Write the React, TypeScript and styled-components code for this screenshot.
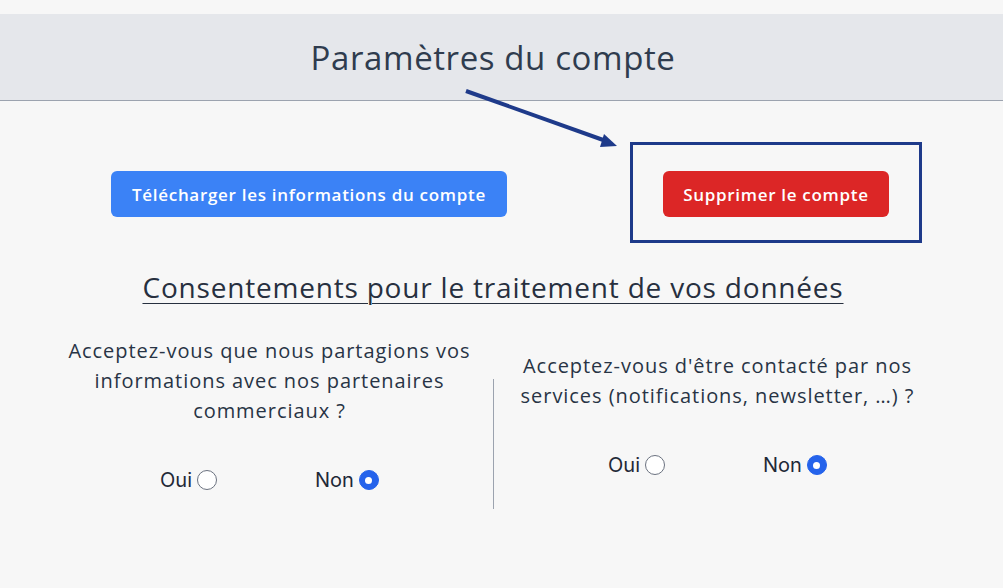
import React from "react";
import styled, { createGlobalStyle } from "styled-components";

const GlobalStyle = createGlobalStyle`
  html, body {
    margin: 0;
    padding: 0;
    background: #f7f7f7;
  }
  body {
    font-family: "Open Sans", "Noto Sans", sans-serif;
    color: #283445;
  }
`;

const Page = styled.div`
  position: relative;
  width: 1003px;
  min-height: 588px;
  padding-top: 14px;
  box-sizing: border-box;
`;

const Header = styled.header`
  height: 86px;
  background: #e5e7eb;
  border-bottom: 1px solid #9ca3af;
  display: flex;
  align-items: center;
  justify-content: center;
`;

const Title = styled.h1`
  margin: 0 0 0 -17px;
  font-size: 33px;
  font-weight: 400;
  color: #2f3c4e;
  letter-spacing: 0.6px;
`;

const ActionsRow = styled.div`
  display: flex;
  align-items: flex-start;
  padding-left: 111px;
  gap: 123px;
  margin-top: 41px;
`;

const Button = styled.button<{ $variant: "primary" | "danger" }>`
  height: 46px;
  padding: 0 ${(p) => (p.$variant === "primary" ? "21px" : "20px")};
  border: none;
  border-radius: 6px;
  background: ${(p) => (p.$variant === "primary" ? "#3b82f6" : "#dc2626")};
  color: #ffffff;
  font-family: "Open Sans", sans-serif;
  font-size: 17px;
  font-weight: 600;
  letter-spacing: 0.7px;
  white-space: nowrap;
  cursor: pointer;
  margin-top: ${(p) => (p.$variant === "primary" ? "29px" : "0")};
`;

const Highlight = styled.div`
  border: 3px solid #1e3a8a;
  padding: 26px 29px 23px;
  box-sizing: content-box;
  width: 228px;
  display: flex;
  justify-content: center;
`;

const SectionTitle = styled.h2`
  margin: 26px 0 0 -17px;
  text-align: center;
  font-size: 28px;
  line-height: 36px;
  font-weight: 400;
  letter-spacing: 0.8px;
  color: #27303f;
  text-decoration: underline;
  text-decoration-thickness: 1px;
  text-underline-offset: 5px;
`;

const Questions = styled.div`
  display: flex;
  align-items: center;
  margin-top: 14px;
  padding-left: 46px;
`;

const Question = styled.div`
  width: 447px;
  display: flex;
  flex-direction: column;
  align-items: center;
`;

const QuestionText = styled.p`
  margin: 0;
  text-align: center;
  font-size: 20px;
  line-height: 30px;
  letter-spacing: 0.95px;
  white-space: nowrap;
  color: #283445;
`;

const Divider = styled.div`
  width: 1px;
  height: 130px;
  background: #9ca3af;
  margin-top: 60px;
  flex-shrink: 0;
`;

const Choices = styled.div`
  display: flex;
  gap: 98px;
  margin-top: 42px;
`;

const Choice = styled.label`
  display: flex;
  align-items: center;
  gap: 5px;
  font-family: "Inter", "Liberation Sans", sans-serif;
  font-size: 20px;
  color: #1f2937;
`;

const Radio = styled.span<{ $checked: boolean }>`
  width: 20px;
  height: 20px;
  border-radius: 50%;
  box-sizing: border-box;
  background: ${(p) => (p.$checked ? "#2563eb" : "#ffffff")};
  border: 1px solid ${(p) => (p.$checked ? "#2563eb" : "#6b7280")};
  display: flex;
  align-items: center;
  justify-content: center;
  &::after {
    content: "";
    display: ${(p) => (p.$checked ? "block" : "none")};
    width: 7px;
    height: 7px;
    border-radius: 50%;
    background: #ffffff;
  }
`;

const ArrowOverlay = styled.svg`
  position: absolute;
  left: 0;
  top: 0;
  pointer-events: none;
`;

function RadioChoice({ label, checked }: { label: string; checked: boolean }) {
  return (
    <Choice>
      {label}
      <Radio $checked={checked} />
    </Choice>
  );
}

export default function App() {
  return (
    <>
      <GlobalStyle />
      <Page>
        <Header>
          <Title>Paramètres du compte</Title>
        </Header>
        <ActionsRow>
          <Button $variant="primary">Télécharger les informations du compte</Button>
          <Highlight>
            <Button $variant="danger">Supprimer le compte</Button>
          </Highlight>
        </ActionsRow>
        <SectionTitle>Consentements pour le traitement de vos données</SectionTitle>
        <Questions>
          <Question>
            <QuestionText>
              Acceptez-vous que nous partagions vos
              <br />
              informations avec nos partenaires
              <br />
              commerciaux&nbsp;?
            </QuestionText>
            <Choices>
              <RadioChoice label="Oui" checked={false} />
              <RadioChoice label="Non" checked={true} />
            </Choices>
          </Question>
          <Divider />
          <Question>
            <QuestionText>
              Acceptez-vous d'être contacté par nos
              <br />
              services (notifications, newsletter, …)&nbsp;?
            </QuestionText>
            <Choices>
              <RadioChoice label="Oui" checked={false} />
              <RadioChoice label="Non" checked={true} />
            </Choices>
          </Question>
        </Questions>
        <ArrowOverlay width="1003" height="588" viewBox="0 0 1003 588">
          <line x1="466" y1="91" x2="606" y2="141" stroke="#1e3a8a" strokeWidth="4" />
          <polygon points="617,146 600,147 604,134" fill="#1e3a8a" />
        </ArrowOverlay>
      </Page>
    </>
  );
}
